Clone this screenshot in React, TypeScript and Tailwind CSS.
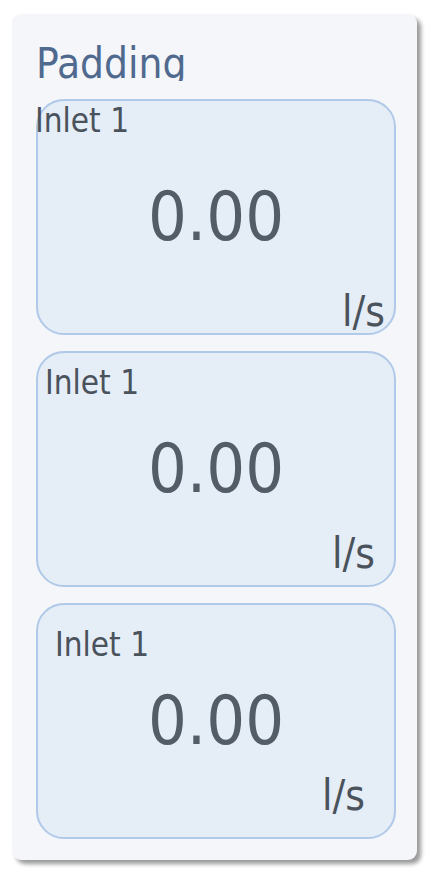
const cards = [
  { pad: 'p-0' },
  { pad: 'p-[10px]' },
  { pad: 'p-[20px]' },
];

function Readout({ pad }: { pad: string }) {
  return (
    <div className={`grid h-[236px] w-[360px] rounded-[28px] border-2 border-[#b1c9e8] bg-[#e5edf7] ${pad}`}>
      <span className="col-start-1 row-start-1 -ml-[3px] -mt-[1px] self-start justify-self-start text-[33px] leading-[42px] text-[#4a525c]">
        Inlet 1
      </span>
      <span className="col-start-1 row-start-1 self-center justify-self-center text-[68px] leading-none text-[#535d68]">
        0.00
      </span>
      <span className="col-start-1 row-start-1 mr-[9px] self-end justify-self-end text-[42px] leading-none text-[#4a525c]">
        l/s
      </span>
    </div>
  );
}

export default function App() {
  return (
    <div className="min-h-screen bg-white pl-[12px] pt-[14px] font-['DejaVu_Sans_Condensed','DejaVu_Sans',sans-serif] [font-stretch:condensed]">
      <div className="flex w-[405px] flex-col rounded-[9px] bg-[#f4f6f9] pb-[21px] pl-[24px] pr-[21px] pt-[29px] shadow-[4px_4px_4px_rgba(0,0,0,0.4)]">
        {/* title gets clipped at the bottom like the original */}
        <div className="h-[38px] overflow-hidden text-[42px] leading-none text-[#50698f]">Padding</div>
        <div className="mt-[18px] flex flex-col gap-[16px]">
          {cards.map((c, i) => (
            <Readout key={i} pad={c.pad} />
          ))}
        </div>
      </div>
    </div>
  );
}
